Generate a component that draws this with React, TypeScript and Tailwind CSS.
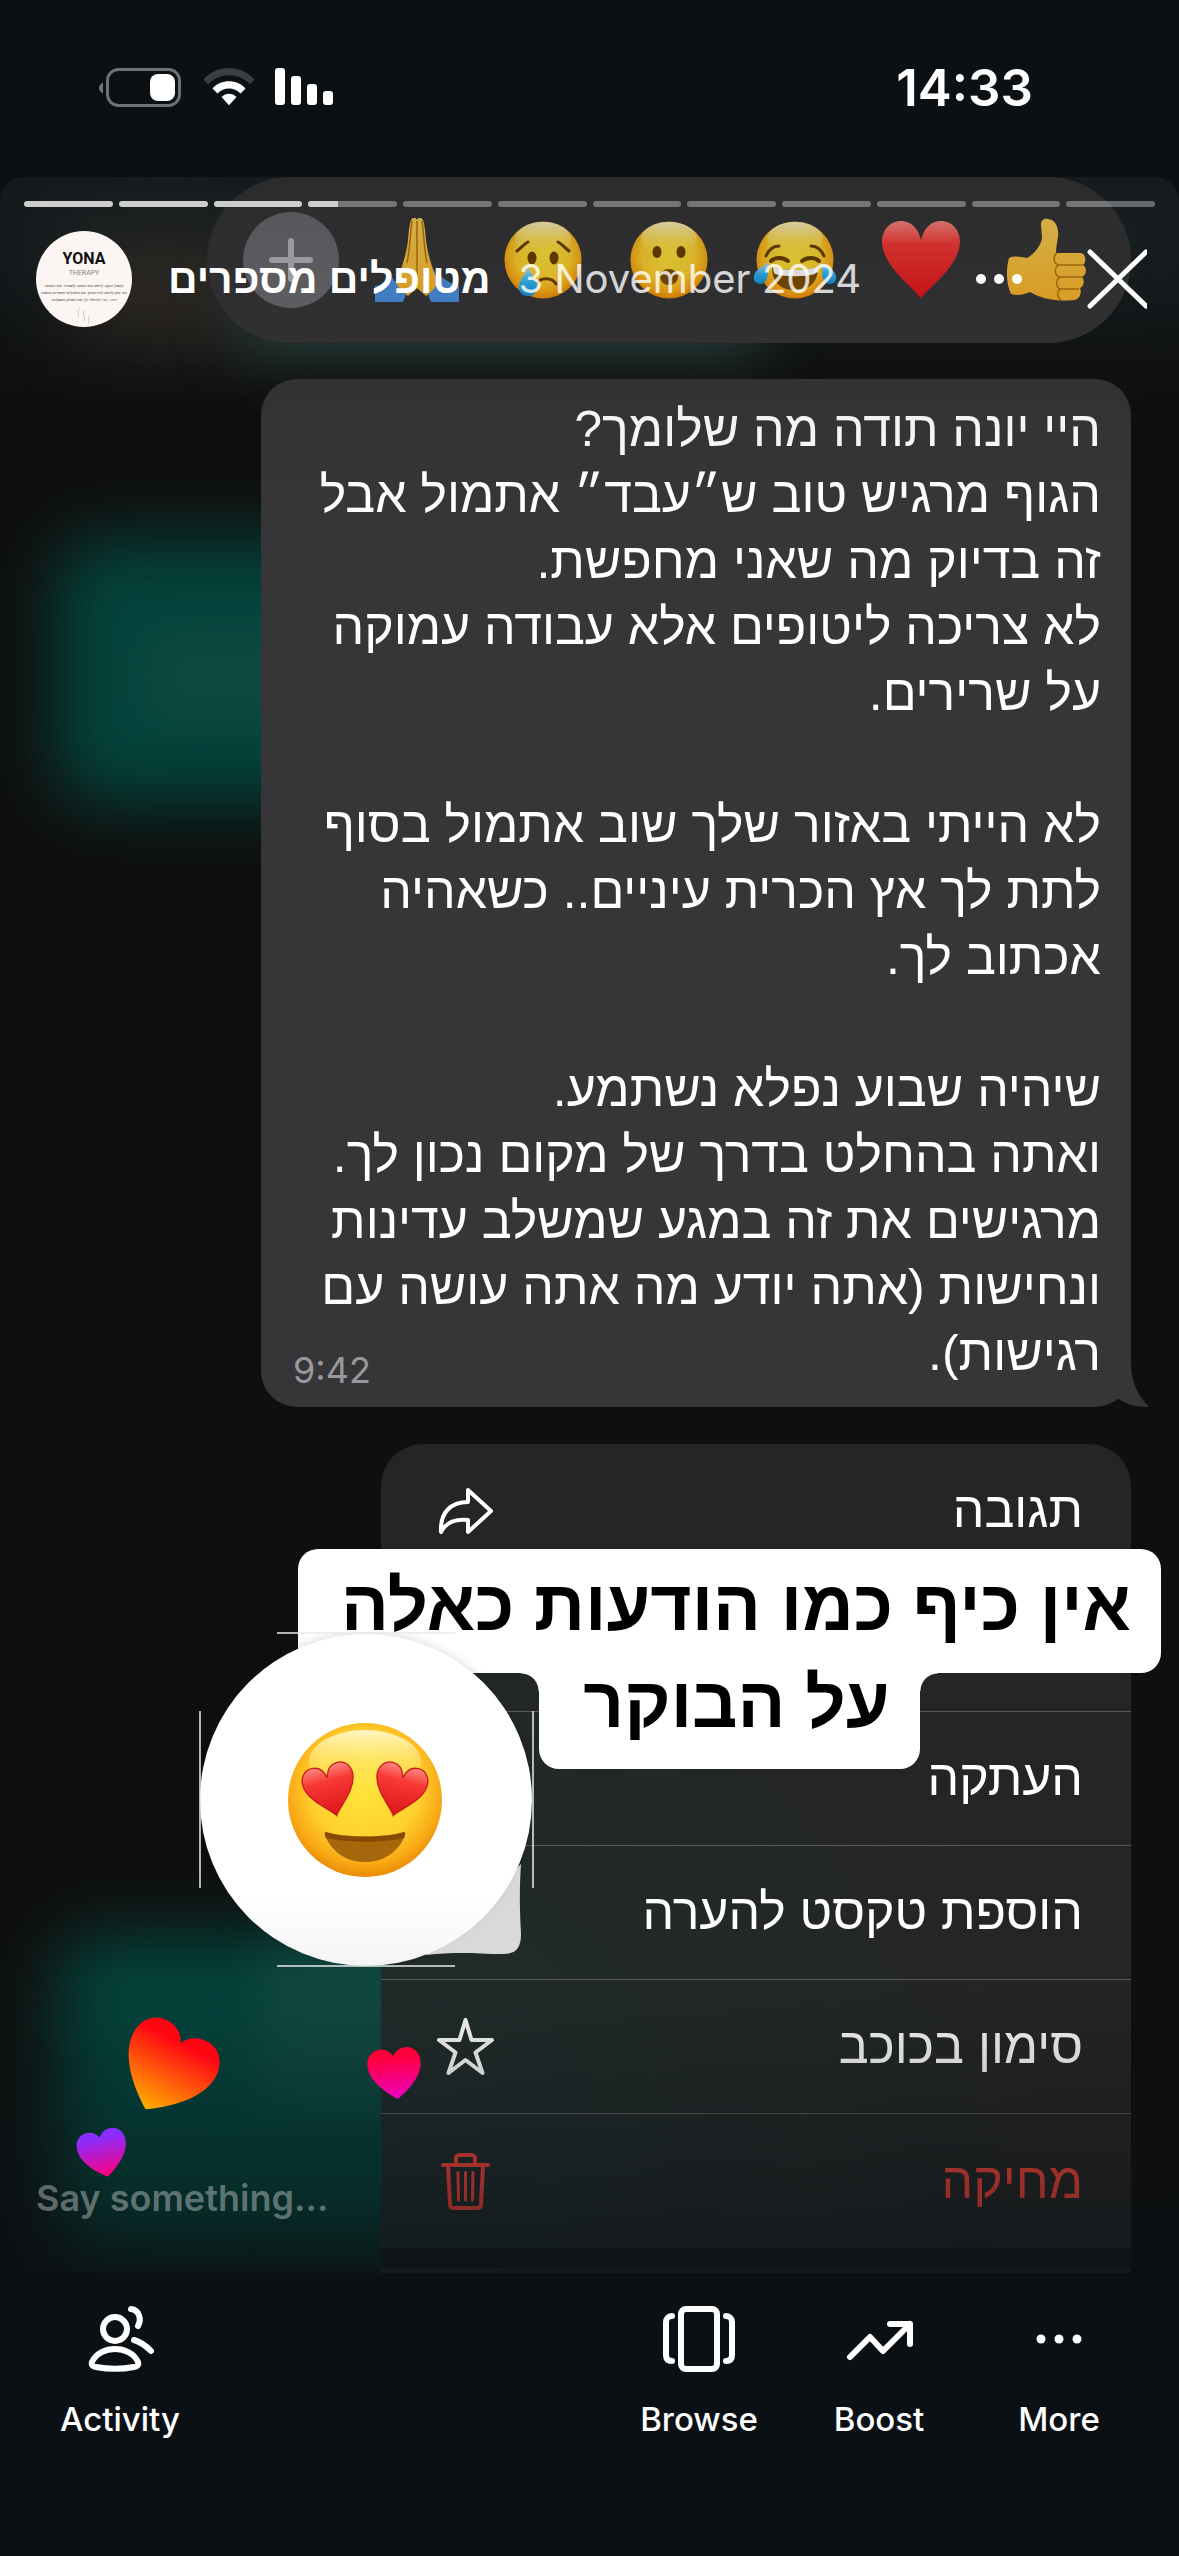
import React from "react";

const HEBREW = "font-['Liberation_Sans','Open_Sans',sans-serif]";

const messageLines = [
  "היי יונה תודה מה שלומך?",
  "הגוף מרגיש טוב ש״עבד״ אתמול אבל",
  "זה בדיוק מה שאני מחפשת.",
  "לא צריכה ליטופים אלא עבודה עמוקה",
  "על שרירים.",
  "",
  "לא הייתי באזור שלך שוב אתמול בסוף",
  "לתת לך אץ הכרית עיניים.. כשאהיה",
  "אכתוב לך.",
  "",
  "שיהיה שבוע נפלא נשתמע.",
  "ואתה בהחלט בדרך של מקום נכון לך.",
  "מרגישים את זה במגע שמשלב עדינות",
  "ונחישות (אתה יודע מה אתה עושה עם",
  "רגישות).",
];

/* ---------- status bar ---------- */

function BatteryIcon() {
  return (
    <svg width="84" height="40" viewBox="0 0 84 40" aria-label="Battery">
      <path d="M4 14.500C1.500 15.500 0 17.500 0 20s1.500 4.500 4 5.500z" fill="#6f7274" />
      <rect x="8.500" y="1.500" width="72" height="36" rx="11" fill="none" stroke="#6f7274" strokeWidth="3" />
      <rect x="51" y="6" width="25" height="27" rx="8" fill="#fff" />
    </svg>
  );
}

function WifiIcon() {
  return (
    <svg width="52" height="38" viewBox="0 0 52 38" aria-label="Wi-Fi">
      <path d="M0.500 11.500C14-3.800 38-3.800 51.500 11.500L47 16.200C35.500 4.200 16.500 4.200 5 16.200z" fill="#3b3f42" />
      <path d="M9.500 20.500C18 10.800 34 10.800 42.500 20.500L37.500 25.500C31 18.800 21 18.800 14.500 25.500z" fill="#fff" />
      <path d="M18.500 29C22.500 24.500 29.500 24.500 33.500 29L26 37.200z" fill="#fff" />
    </svg>
  );
}

function SignalIcon() {
  return (
    <svg width="60" height="38" viewBox="0 0 60 38" fill="#fff" aria-label="Signal">
      <rect x="0" y="0" width="10" height="37" rx="3" />
      <rect x="16" y="8" width="10" height="29" rx="3" />
      <rect x="32" y="16" width="10" height="21" rx="3" />
      <rect x="48" y="23" width="10" height="14" rx="3" />
    </svg>
  );
}

/* ---------- emoji drawings ---------- */

function EmojiDefs() {
  return (
    <svg width="0" height="0" className="absolute" aria-hidden="true">
      <defs>
        <radialGradient id="face" cx="50%" cy="42%" r="58%">
          <stop offset="0" stopColor="#ffe43c" />
          <stop offset="0.6" stopColor="#ffd12f" />
          <stop offset="0.86" stopColor="#f9a915" />
          <stop offset="1" stopColor="#ea8b08" />
        </radialGradient>
        <linearGradient id="shine" x1="0" y1="0" x2="0" y2="1">
          <stop offset="0" stopColor="#fffde0" stopOpacity="0.85" />
          <stop offset="1" stopColor="#ffe94a" stopOpacity="0" />
        </linearGradient>
        <linearGradient id="tear" x1="0" y1="0" x2="0" y2="1">
          <stop offset="0" stopColor="#aee6ff" />
          <stop offset="0.5" stopColor="#35b6f2" />
          <stop offset="1" stopColor="#1590dc" />
        </linearGradient>
        <linearGradient id="redheart" x1="0" y1="0" x2="0" y2="1">
          <stop offset="0" stopColor="#ff8a84" />
          <stop offset="0.3" stopColor="#f83a36" />
          <stop offset="1" stopColor="#dc1418" />
        </linearGradient>
        <linearGradient id="skin" x1="0" y1="0" x2="0" y2="1">
          <stop offset="0" stopColor="#ffd355" />
          <stop offset="1" stopColor="#f6b228" />
        </linearGradient>
      </defs>
    </svg>
  );
}

function Face({ children, label }: { children: React.ReactNode; label: string }) {
  return (
    <svg width="84" height="84" viewBox="0 0 84 84" role="img" aria-label={label}>
      <circle cx="42" cy="42" r="38.500" fill="url(#face)" />
      <ellipse cx="42" cy="21" rx="28" ry="17" fill="url(#shine)" />
      {children}
    </svg>
  );
}

const HEART_PATH =
  "M42 81C37 71 4 50 3 24 3 12 11 3 22 3c9 0 17 6 20 19C45 9 53 3 62 3c11 0 19 9 19 21C80 50 47 71 42 81z";

function Pray() {
  return (
    <svg width="84" height="84" viewBox="0 0 84 84" role="img" aria-label="Pray">
      <path d="M38 0c-3 1-4 10-5 22-1 10-5 26-10 36l-4 10 14 10 9-8V2c-1-2-2-3-4-2z" fill="url(#skin)" />
      <path d="M46 0c3 1 4 10 5 22 1 10 5 26 10 36l4 10-14 10-9-8V2c1-2 2-3 4-2z" fill="url(#skin)" />
      <path d="M42 3v56M37 3c-2 14-2 28-5 42M47 3c2 14 2 28 5 42" stroke="#b9770e" strokeWidth="1.500" fill="none" />
      <path d="M0 68c8-2 12-5 17-9 5 8 9 14 14 17l-3 8H0z" fill="#4a8fdc" />
      <path d="M84 68c-8-2-12-5-17-9-5 8-9 14-14 17l3 8h28z" fill="#4a8fdc" />
    </svg>
  );
}

function Cry() {
  return (
    <Face label="Cry">
      <g fill="none" stroke="#6b4000" strokeWidth="3" strokeLinecap="round">
        <path d="M16 33c4-3 7-7 11-9M68 33c-4-3-7-7-11-9" />
        <path d="M36 66c3-7 15-7 19 0" />
      </g>
      <ellipse cx="31" cy="40" rx="4.500" ry="6.500" fill="#6b4000" />
      <ellipse cx="53" cy="40" rx="4.500" ry="6.500" fill="#6b4000" />
      <path d="M27 49c3 8 9 13 9 20 0 6-4 9-9 9s-9-3-9-9c0-7 6-12 9-20z" fill="url(#tear)" />
    </Face>
  );
}

function OpenMouth() {
  return (
    <Face label="Surprised">
      <ellipse cx="30" cy="34" rx="4.500" ry="6" fill="#6b4000" />
      <ellipse cx="54" cy="34" rx="4.500" ry="6" fill="#6b4000" />
      <ellipse cx="42" cy="59" rx="9" ry="8" fill="#7d4d00" />
    </Face>
  );
}

function Joy() {
  return (
    <Face label="Joy">
      <g fill="none" stroke="#6b4000" strokeWidth="3" strokeLinecap="round">
        <path d="M13 38c3-7 8-10 13-10M71 38c-3-7-8-10-13-10" />
        <path d="M18 43c4-4 12-4 17 0M66 43c-4-4-12-4-17 0" strokeWidth="4" />
      </g>
      <path d="M19 49c10 4 36 4 46 0 0 16-9 23-23 23s-23-7-23-23z" fill="#7d4d00" />
      <path d="M20 49c10 4 34 4 44 0 0 4-1 6-2 7-10 3-30 3-40 0-1-1-2-3-2-7z" fill="#fff" />
      <path d="M15 45c1 9 0 20-7 21-5 0-8-3-7-8 1-6 7-8 14-13z" fill="url(#tear)" />
      <path d="M69 45c-1 9 0 20 7 21 5 0 8-3 7-8-1-6-7-8-14-13z" fill="url(#tear)" />
    </Face>
  );
}

function RedHeart() {
  return (
    <svg width="84" height="84" viewBox="0 0 84 84" role="img" aria-label="Heart">
      <path d={HEART_PATH} fill="url(#redheart)" />
    </svg>
  );
}

function Thumb() {
  return (
    <svg width="84" height="84" viewBox="0 0 84 84" role="img" aria-label="Thumbs up">
      <path
        d="M4 40c6-3 12-1 18 0 6-3 14-12 15-20l-1-13c0-5 3-7 7-6 8 1 11 9 10 18-1 6-2 11-2 16h24c6 0 7 9 3 12 4 2 4 10-1 12 3 3 2 10-2 11 2 4 0 11-6 12-16 2-32-1-44-8-7 3-13 4-19 2-5-10-5-26-2-36z"
        fill="url(#skin)"
      />
      <g fill="none" stroke="#b9770e" strokeWidth="1.500">
        <path d="M78 47H54c-6-1-6-10-2-12M77 59H55c-6-1-6-10-1-12M74 71H56c-6-1-5-10-1-12M56 71c-5 2-4 9 0 11" />
      </g>
    </svg>
  );
}

function HeartEyes() {
  return (
    <svg width="154" height="154" viewBox="0 0 154 154" role="img" aria-label="Heart eyes">
      <circle cx="77" cy="77" r="77" fill="url(#face)" />
      <ellipse cx="77" cy="39" rx="56" ry="32" fill="url(#shine)" />
      <g transform="translate(42.500 67.500) rotate(-14) scale(0.660) translate(-42 -42)">
        <path d={HEART_PATH} fill="url(#redheart)" stroke="#c41d1d" strokeWidth="2" />
      </g>
      <g transform="translate(111.500 67.500) rotate(14) scale(0.660) translate(-42 -42)">
        <path d={HEART_PATH} fill="url(#redheart)" stroke="#c41d1d" strokeWidth="2" />
      </g>
      <path d="M38 109c18 6 60 6 78 0 2 0 1 4 0 6-8 16-22 24-39 24s-31-8-39-24c-1-2-2-6 0-6z" fill="#a5660c" />
      <path d="M38 109c18 6 60 6 78 0 2 0 1 4 0 6-22 5-54 5-78 0-1-2-2-6 0-6z" fill="#7a3e00" opacity="0.7" />
    </svg>
  );
}

/* ---------- menu icons ---------- */

const menuStroke = {
  fill: "none",
  stroke: "currentColor",
  strokeWidth: 4,
  strokeLinejoin: "round" as const,
  strokeLinecap: "round" as const,
};

function ShareIcon() {
  return (
    <svg width="58" height="58" viewBox="0 0 58 58" {...menuStroke}>
      <path d="M31 8 54 29 31 50V38C19 37 9 40 4 50 3 30 14 20 31 20z" />
    </svg>
  );
}

function StarIcon() {
  return (
    <svg width="58" height="58" viewBox="0 0 58 58" {...menuStroke}>
      <path d="M28.500 2 34.500 22H55L38.500 34.500 45.500 55 28.500 42 11.500 55 18.500 34.500 2 22H22.500z" />
    </svg>
  );
}

function TrashIcon() {
  return (
    <svg width="58" height="58" viewBox="0 0 58 58" {...menuStroke}>
      <path d="M6 13H51M19 12V7c0-3 1-4 4-4h11c3 0 4 1 4 4v5" />
      <path d="M11 14 13 52c0 3 1 4 4 4h23c3 0 4-1 4-4L46 14" />
      <path d="M21 20.500 21.500 48M28.500 20.500V48M36 20.500 35.500 48" strokeWidth="3" />
    </svg>
  );
}

function MenuRow({ label, icon, tone }: { label: string; icon?: React.ReactNode; tone?: string }) {
  return (
    <button
      type="button"
      className={`flex h-[134px] w-full items-center justify-between border-b-[1px] border-[#5a5c5c] pr-12 pl-14 text-[50px] ${tone ?? "text-white"}`}
    >
      <span>{label}</span>
      {icon}
    </button>
  );
}

/* ---------- story sections ---------- */

function ReactionBar() {
  const emojis = [<Thumb />, <RedHeart />, <Joy />, <OpenMouth />, <Cry />, <Pray />];
  return (
    <div className="relative mr-12 ml-[207px] flex h-[166px] items-center justify-between rounded-full bg-[#363638] px-9">
      {emojis.map((emoji, i) => (
        <button type="button" key={i} className="flex w-24 justify-center">{emoji}</button>
      ))}
      <button type="button" aria-label="More reactions" className="flex size-24 items-center justify-center rounded-full bg-[#6a6a6f]">
        <svg width="44" height="44" viewBox="0 0 44 44" stroke="#b4b4ba" strokeWidth="6" strokeLinecap="round">
          <path d="M22 3V41M3 22H41" />
        </svg>
      </button>
    </div>
  );
}

function MessageBubble() {
  return (
    <div className="relative mt-9 mr-12 ml-[261px] rounded-[36px] bg-[#363638] pt-[17px] pr-[30px] pb-[21px] pl-8 text-[50px] leading-[66px] text-white">
      {messageLines.map((line, i) => (
        <p key={i} className="h-[66px] whitespace-nowrap">{line}</p>
      ))}
      <span className="absolute bottom-3 left-8 font-['Inter',sans-serif] text-4xl leading-[50px] text-[#98989d]">9:42</span>
      <svg className="absolute -right-[18px] bottom-0" width="52" height="44" viewBox="0 0 52 44" fill="#363638" aria-hidden="true">
        <path d="M34 0c0 20 7 32 18 44-14 0-24-3-33-10L0 20V0z" />
      </svg>
    </div>
  );
}

function ContextMenu() {
  return (
    <div className="relative mt-[37px] mr-12 ml-[381px] rounded-t-[42px] bg-[#252525] bg-[radial-gradient(ellipse_at_0%_80%,#1f2d2b_0%,#202a2900_62%)]">
      <MenuRow label="תגובה" icon={<ShareIcon />} />
      <div className="h-[134px] border-b-[1px] border-[#5a5c5c]" />
      <MenuRow label="העתקה" />
      <MenuRow label="הוספת טקסט להערה" />
      <MenuRow label="סימון בכוכב" icon={<StarIcon />} />
      <button
        type="button"
        className="flex h-[134px] w-full items-center justify-between pr-12 pl-14 text-[50px] text-[#ff453a]"
      >
        <span>מחיקה</span>
        <TrashIcon />
      </button>
      <div className="h-[20px] bg-[#171919]" />
      <div className="h-[5px]" />
    </div>
  );
}

function Avatar() {
  return (
    <div dir="rtl" className="flex size-24 shrink-0 flex-col items-center overflow-hidden rounded-full bg-[#fbf6f3] pt-[19px]">
      <span className="font-['Roboto',sans-serif] text-[16px] leading-[18px] font-bold text-[#111]">YONA</span>
      <span className="font-['Roboto',sans-serif] text-[7px] leading-[10px] text-[#8a8583]">THERAPY</span>
      <span className="mt-1 text-center text-[4px] leading-[7px] whitespace-nowrap text-[#333]">
        לטפל בגוף, לרפא את הכאב ולשחרר את המתח
        <br />
        אני כאן לדאוג לבריאותך עם טיפולים רפואיים וכוסות
        <br />
        רוח – כדי להחזיר לך את האיזון והשלווה.
      </span>
      <svg width="16" height="18" viewBox="0 0 16 18" fill="none" stroke="#cdc4bd" className="mt-1">
        <path d="M4 1c-4 4 0 5-2 9M9 3c-4 4 1 6-1 11M14 9c-3 2 0 4-2 8" />
      </svg>
    </div>
  );
}

function StoryHeader() {
  return (
    <header className="absolute inset-x-0 top-0 px-6 pt-6">
      <div className="flex gap-1.5">
        {Array.from({ length: 12 }, (_, i) => (
          <div key={i} className="h-1.5 flex-1 overflow-hidden rounded-full bg-white/35">
            <div
              className="h-full bg-[#cdcdcd]"
              style={{ width: i < 3 ? "100%" : i === 3 ? "33%" : "0%" }}
            />
          </div>
        ))}
      </div>
      <div className="mt-6 flex items-center pr-2 pl-3">
        <Avatar />
        <h1 dir="rtl" className="ml-9 text-[41px] leading-[54px] font-bold whitespace-nowrap text-white">מטופלים מספרים</h1>
        <time className="ml-7 font-['Inter',sans-serif] text-[40px] leading-[54px] whitespace-nowrap text-white/80">3 November 2024</time>
        <div className="flex-1" />
        <button type="button" aria-label="Story options">
          <svg width="48" height="12" viewBox="0 0 48 12" fill="#fff">
            <circle cx="6" cy="6" r="5" />
            <circle cx="24" cy="6" r="5" />
            <circle cx="42" cy="6" r="5" />
          </svg>
        </button>
        <button type="button" aria-label="Close" className="ml-16">
          <svg width="60" height="60" viewBox="0 0 60 60" stroke="#fff" strokeWidth="5" strokeLinecap="round">
            <path d="M3 3 59 57M59 3 3 57" />
          </svg>
        </button>
      </div>
    </header>
  );
}

function Caption() {
  return (
    <div dir="rtl" className="absolute top-[1372px] right-[18px] left-[298px] flex flex-col items-center text-[71px] font-bold whitespace-nowrap text-black">
      <div className="h-[124px] w-full rounded-[20px] bg-white pr-[30px] leading-[114px]">אין כיף כמו הודעות כאלה</div>
      <div className="relative h-[96px] rounded-b-[20px] bg-white pr-[30px] pl-[44px] leading-[60px]">
        על הבוקר
        <span className="absolute top-0 right-full size-[18px] bg-[radial-gradient(circle_at_0%_100%,transparent_17px,white_18px)]" />
        <span className="absolute top-0 left-full size-[18px] bg-[radial-gradient(circle_at_100%_100%,transparent_17px,white_18px)]" />
      </div>
    </div>
  );
}

function EmojiSlider() {
  return (
    <div className="absolute top-[1455px] left-[199px] grid size-[335px] place-items-center">
      <svg className="absolute inset-0" width="335" height="335" viewBox="0 0 335 335" aria-hidden="true">
        <defs>
          <linearGradient id="disc" x1="0" y1="0" x2="0" y2="1">
            <stop offset="0.8" stopColor="#fff" />
            <stop offset="1" stopColor="#f4f4f4" />
          </linearGradient>
          <filter id="soft" x="-10%" y="-10%" width="120%" height="120%">
            <feGaussianBlur stdDeviation="4" />
          </filter>
        </defs>
        <path d="M322 232c-2 30-1 50 0 70 0 14-5 20-18 20-26 0-43-3-77 1z" fill="#d9d9d9" />
        <circle cx="167" cy="165" r="165" fill="#000" opacity="0.12" filter="url(#soft)" />
        <circle cx="167" cy="168" r="166" fill="url(#disc)" />
        <g stroke="#e8eaeb" strokeWidth="1.500">
          <path d="M78 1H256M78 334H256M1 79V256M334 79V256" />
        </g>
      </svg>
      <div className="relative pr-1">
        <HeartEyes />
      </div>
    </div>
  );
}

function FloatingHeart({ id, from, to, size, className }: { id: string; from: string; to: string; size: number; className: string }) {
  return (
    <svg className={className} width={size} height={size} viewBox="0 0 84 84" aria-hidden="true">
      <defs>
        <linearGradient id={id} x1="0" y1="0" x2="0" y2="1">
          <stop offset="0.15" stopColor={from} />
          <stop offset="1" stopColor={to} />
        </linearGradient>
      </defs>
      <path d="M42 81C34 76 2 54 2 28 2 14 11 5 23 5c9 0 16 5 19 12C45 10 52 5 61 5c12 0 21 9 21 23C82 54 50 76 42 81z" fill={`url(#${id})`} />
    </svg>
  );
}

/* ---------- bottom bar ---------- */

const tabStroke = {
  fill: "none",
  stroke: "#fff",
  strokeWidth: 6,
  strokeLinejoin: "round" as const,
  strokeLinecap: "round" as const,
};

function Tab({ label, children }: { label: string; children: React.ReactNode }) {
  return (
    <button type="button" className="flex w-[180px] flex-col items-center gap-[22px]">
      <svg width="72" height="72" viewBox="0 0 72 72" {...tabStroke}>{children}</svg>
      <span className="text-[33px] leading-[44px] font-medium text-white">{label}</span>
    </button>
  );
}

function BottomBar() {
  return (
    <nav className="flex flex-1 items-start px-[30px] pt-[30px] pb-24">
      <Tab label="Activity">
        <circle cx="31" cy="26" r="12" />
        <path d="M8 59C12 50 22 46 31 46s19 4 23 13c1 3-1 5-4 5-13 2.500-25 2.500-38 0-3 0-5-2-4-5z" />
        <path d="M47 6c8 1 11 10 7 17M50 37c7 2 12 6 17 11" />
      </Tab>
      <div className="flex-1" />
      <Tab label="Browse">
        <rect x="18" y="6" width="36" height="60" rx="5" />
        <path d="M9 13c-4 0-6 3-6 6v33c0 4 2 6 6 6M63 13c4 0 6 3 6 6v33c0 4-2 6-6 6" />
      </Tab>
      <Tab label="Boost">
        <path d="M7 54 27 34 40 48 67 21M47 21H67V41" />
      </Tab>
      <Tab label="More">
        <g fill="#fff" stroke="none">
          <circle cx="18" cy="36" r="4.500" />
          <circle cx="36" cy="36" r="4.500" />
          <circle cx="54" cy="36" r="4.500" />
        </g>
      </Tab>
    </nav>
  );
}

export default function App() {
  return (
    <div className="flex min-h-screen flex-col bg-[#0b1014] font-['Inter',sans-serif]">
      <EmojiDefs />
      <div className="flex h-[177px] items-start justify-between pt-[68px] pr-[146px] pl-[99px]">
        <div className="flex items-start gap-5">
          <BatteryIcon />
          <WifiIcon />
          <SignalIcon />
        </div>
        <span className="text-[51px] leading-[40px] font-semibold text-white">14:33</span>
      </div>

      <main className={`relative overflow-hidden rounded-t-3xl bg-[#0f0f0f] ${HEBREW}`}>
        <div aria-hidden="true">
          <div className="absolute -top-24 -left-10 h-60 w-[1300px] bg-[#1c2427] blur-[60px]" />
          <div className="absolute top-16 left-20 h-24 w-44 bg-[#4a3d30] opacity-60 blur-[40px]" />
          <div className="absolute top-24 left-60 h-20 w-[520px] bg-[#2c4641] blur-[30px]" />
          <div className="absolute top-[362px] left-14 h-[264px] w-96 rounded-[40px] bg-[#04443c] blur-[34px]" />
          <div className="absolute top-[460px] left-[150px] h-20 w-60 bg-[#1c4f48] opacity-50 blur-[24px]" />
          <div className="absolute top-[1758px] left-14 h-[320px] w-[460px] rounded-[40px] bg-[#04443c] blur-[34px]" />
          <div className="absolute top-[1770px] left-[260px] h-40 w-60 bg-[#1c4f48] opacity-50 blur-[24px]" />
        </div>

        <div dir="rtl" className="relative">
          <ReactionBar />
          <MessageBubble />
          <ContextMenu />
        </div>

        <div className="pointer-events-none absolute inset-x-0 top-0 h-80 bg-linear-to-b from-black/20 to-transparent" />
        <div className="pointer-events-none absolute inset-x-0 bottom-0 h-[300px] bg-linear-to-b from-transparent to-[#0b1014]/60" />

        <StoryHeader />
        <Caption />
        <EmojiSlider />
        <FloatingHeart id="h1" from="#ff0514" to="#ffae00" size={98} className="absolute top-[1843px] left-[118px] rotate-[28deg]" />
        <FloatingHeart id="h2" from="#ff0038" to="#ea00c0" size={56} className="absolute top-[1868px] left-[367px] -rotate-6" />
        <FloatingHeart id="h3" from="#8a2cff" to="#ff0078" size={52} className="absolute top-[1950px] left-[77px] -rotate-12" />
        <input
          type="text"
          aria-label="Say something"
          placeholder="Say something..."
          className="absolute bottom-12 left-9 w-[330px] bg-transparent font-['Inter',sans-serif] text-4xl leading-[54px] font-semibold outline-none placeholder:text-white/35"
        />
      </main>

      <BottomBar />
    </div>
  );
}
